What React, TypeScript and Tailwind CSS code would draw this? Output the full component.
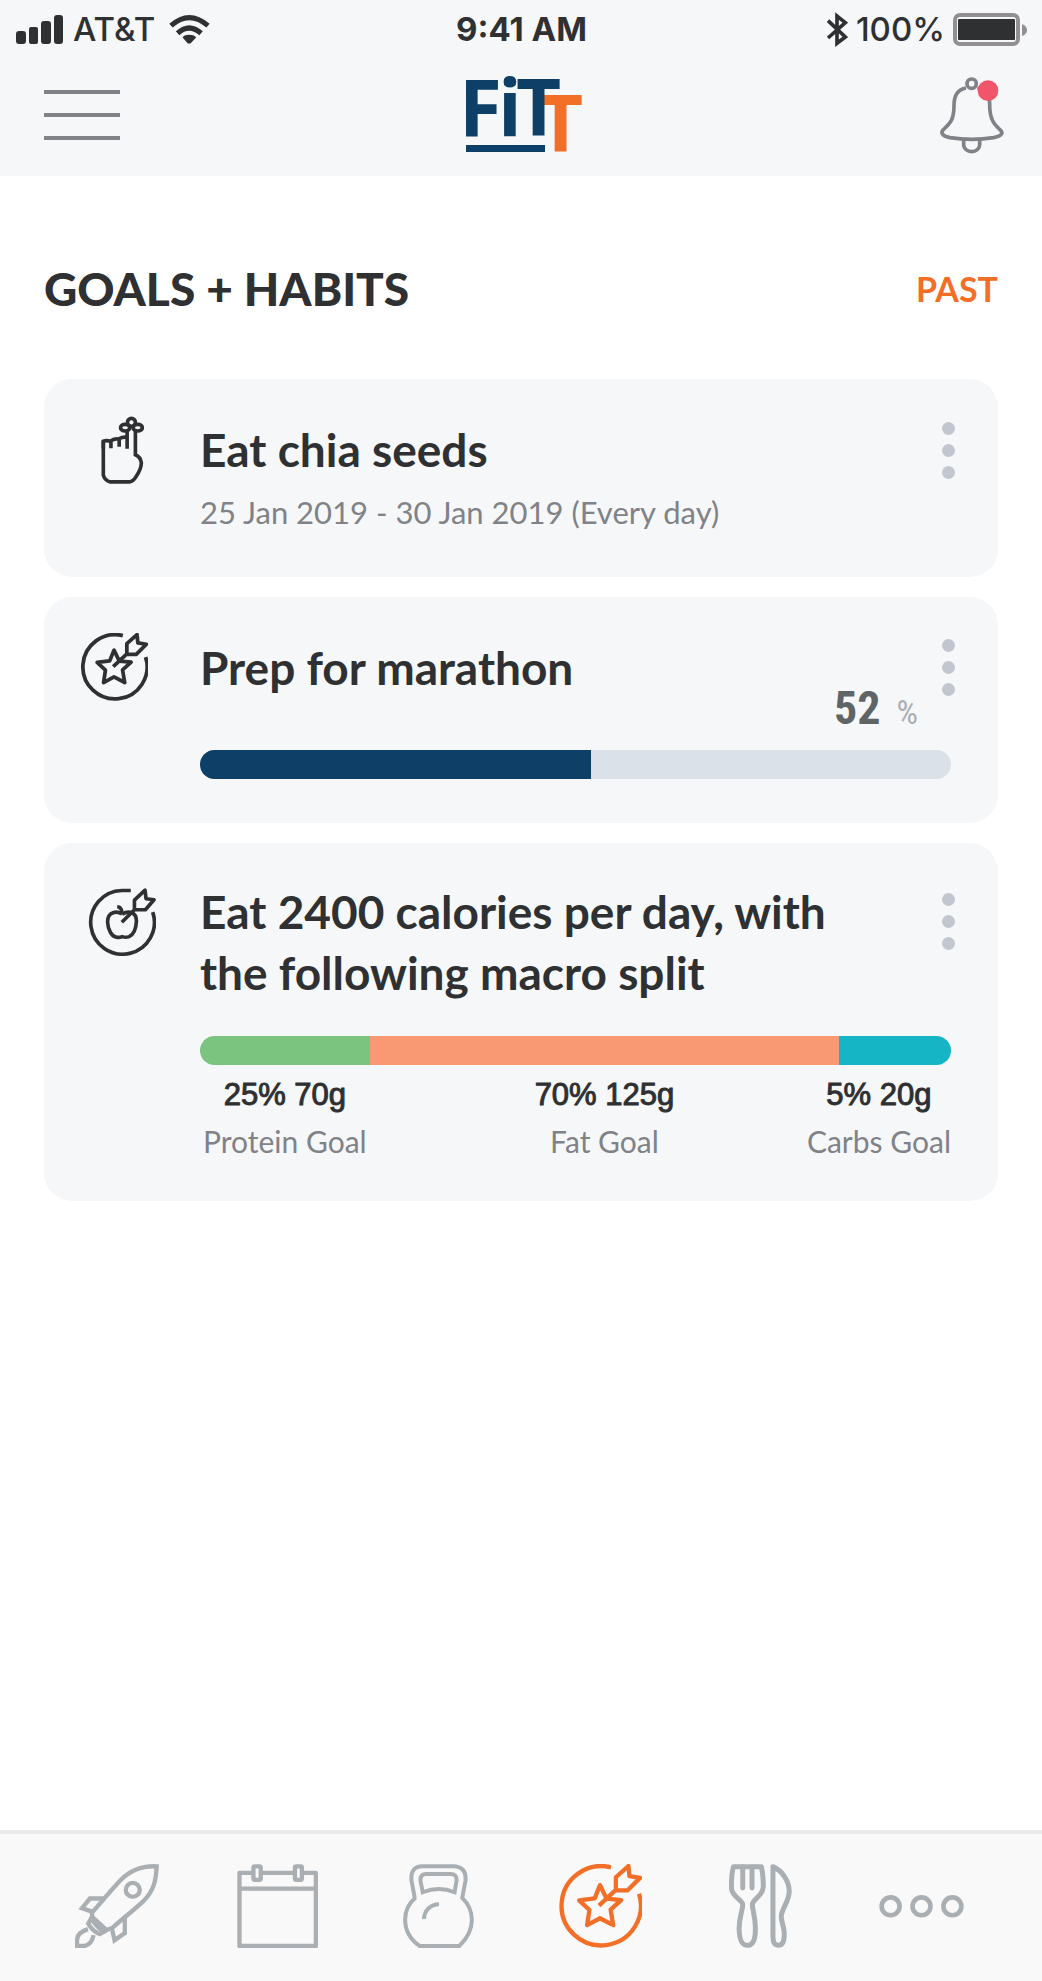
import type { ReactNode } from 'react'

const macros = [
  { share: '25%', grams: '70g', label: 'Protein Goal', color: 'bg-[#7bc47f]', align: 'justify-self-center' },
  { share: '70%', grams: '125g', label: 'Fat Goal', color: 'bg-[#f99973]', align: 'justify-self-center' },
  { share: '5%', grams: '20g', label: 'Carbs Goal', color: 'bg-[#15b5c6]', align: 'justify-self-end' },
]

const macroColumns = 'grid grid-cols-[minmax(0,170fr)_minmax(0,470fr)_minmax(0,112fr)]'

function SignalIcon() {
  return (
    <svg className="h-[29px] w-[47px]" viewBox="0 0 47 29" fill="currentColor" aria-hidden="true">
      <rect x="0" y="16" width="10" height="13" rx="3" />
      <rect x="13" y="12" width="9" height="17" rx="2" />
      <rect x="25" y="6" width="10" height="23" rx="3" />
      <rect x="38" y="0" width="9" height="29" rx="3" />
    </svg>
  )
}

function WifiIcon() {
  return (
    <svg className="h-[29px] w-[41px]" viewBox="510 39 124 87" aria-hidden="true">
      <path d="M516 71 Q571 22 628 71" fill="none" stroke="currentColor" strokeWidth="15" />
      <path d="M536 94 Q571 62 607 94" fill="none" stroke="currentColor" strokeWidth="16" />
      <path d="M551 107 Q554 98 571 98 Q588 98 592 107 L575 125 H567 Z" fill="currentColor" />
    </svg>
  )
}

function BluetoothIcon() {
  return (
    <svg className="h-[35px] w-[21px]" viewBox="144 30 63 105" fill="none" stroke="currentColor" strokeWidth="11" aria-hidden="true">
      <path d="M147 56 L199 105 L174 124 V42 L199 62 L147 108" />
    </svg>
  )
}

function BatteryIcon() {
  return (
    <svg className="h-[33px] w-[74px]" viewBox="0 0 74 33" aria-hidden="true">
      <rect x="2" y="2" width="63" height="29" rx="5" fill="none" stroke="#918f90" strokeWidth="4" />
      <rect x="5" y="6" width="57" height="21" rx="1" fill="#2f3032" />
      <path d="M69 11 Q74 13 74 17 Q74 21 69 23 Z" fill="#918f90" />
    </svg>
  )
}

function Logo() {
  return (
    <svg className="h-[75px] w-[117px] overflow-visible" viewBox="0 0 117 75" role="img" aria-label="FiTT">
      <g fontFamily="'Open Sans', sans-serif" fontWeight="700" fontSize="78" fill="#0e3f66">
        <text x="72" y="74" fill="#f36e26">T</text>
        <text x="-7" y="58">F</text>
        <text x="32" y="58">i</text>
        <text x="50" y="58">T</text>
      </g>
      <rect x="0" y="67" width="79" height="7" fill="#0e3f66" />
    </svg>
  )
}

function BellIcon() {
  return (
    <svg className="h-[77px] w-16" viewBox="480 230 192 231" fill="none" stroke="#808287" strokeWidth="11" aria-hidden="true">
      <circle cx="575" cy="250" r="14" />
      <path d="M558 263 C535 267 522 285 522 315 C522 356 514 366 489 389 C481 399 489 408 510 412 Q575 422 641 412 C662 408 671 400 662 390 C640 371 629 355 629 312 C629 283 617 266 592 263" />
      <path d="M551 419 V434 A24 20 0 0 0 599 434 V419" />
      <circle cx="624" cy="271" r="31" fill="#f0556b" stroke="none" />
    </svg>
  )
}

function HandIcon() {
  return (
    <svg className="h-[68px] w-[43px]" viewBox="212 527 130 205" fill="none" stroke="currentColor" strokeWidth="11" aria-hidden="true">
      <path d="M219 625 V603 Q230 599 242 604 V624 M242 602 Q252 593 267 597 V620 M267 595 Q278 589 291 591" />
      <path d="M291 626 V573 M219 603 V706 Q224 722 240 726 H298 Q310 724 318 710 Q334 686 334 668 Q331 650 316 644 V573" />
      <circle cx="304" cy="546" r="12" strokeWidth="11" />
      <ellipse cx="285" cy="562" rx="14" ry="10" />
      <ellipse cx="323" cy="562" rx="14" ry="10" />
    </svg>
  )
}

function StarTargetIcon({ className, strokeWidth }: { className: string; strokeWidth: number }) {
  return (
    <svg className={className} viewBox="533 131 254 254" fill="none" stroke="currentColor" strokeWidth={strokeWidth} strokeLinejoin="round" aria-hidden="true">
      <path d="M693 141 A120 120 0 1 0 778 221" />
      <path d="M660 195 L644 235 L597 241 L628 270 L621 316 L660 295 L700 316 L692 269 L724 240 L680 236 Z" />
      <path d="M657 257 L708 209 V171 L746 137 L749 168 L781 173 L743 211 H708" />
    </svg>
  )
}

function AppleTargetIcon() {
  return (
    <svg className="size-[68px]" viewBox="174 146 205 204" fill="none" stroke="currentColor" strokeWidth="11" strokeLinejoin="round" aria-hidden="true">
      <path d="M303 153 H276 A96 96 0 1 0 369 218" />
      <path d="M277 224 C262 214 233 216 233 248 C234 274 247 291 258 293 Q268 296 277 292 Q288 296 298 292 C311 286 319 268 320 245 C320 218 297 213 277 224" />
      <path d="M262 202 Q275 203 276 218" />
      <path d="M276 249 L314 211 V182 L346 152 L349 178 L373 181 L347 211 H314" />
    </svg>
  )
}

function RocketIcon() {
  return (
    <svg className="h-[84px] w-[84px]" viewBox="75 131 253 253" fill="none" stroke="currentColor" strokeWidth="13" aria-hidden="true">
      <path d="M321 138 C270 136 237 154 212 180 C185 208 160 240 126 278 L127 290 L170 330 L188 323 C220 294 250 272 282 242 C313 210 319 180 321 138 Z" />
      <circle cx="249" cy="209" r="21" />
      <path d="M166 235 H120 L96 264 L130 276" />
      <path d="M225 294 V339 L194 361 L186 324" />
      <path d="M126 290 L115 310 Q126 332 149 342 L170 331 M128 300 Q138 318 157 331" />
      <path d="M114 327 Q82 337 81 360 V378 H104 Q126 372 131 345" />
    </svg>
  )
}

function CalendarIcon() {
  return (
    <svg className="h-[84px] w-[81px]" viewBox="561 131 243 253" fill="none" stroke="currentColor" strokeWidth="13" strokeLinejoin="round" aria-hidden="true">
      <path d="M568 158 H798 V378 H568 Z M568 205 H798" />
      <rect x="610" y="138" width="22" height="41" rx="4" fill="#f9f9f9" />
      <rect x="735" y="138" width="21" height="41" rx="4" fill="#f9f9f9" />
    </svg>
  )
}

function KettlebellIcon() {
  return (
    <svg className="h-[84px] w-[71px]" viewBox="72 131 213 253" fill="none" stroke="currentColor" strokeWidth="12" aria-hidden="true">
      <path d="M107 233 L97 180 Q94 138 130 138 H225 Q263 141 260 180 L250 233 C273 255 279 278 279 300 C279 338 256 364 241 378 H122 C90 356 78 325 78 298 C78 265 94 245 110 232" />
      <path d="M131 216 L124 180 Q124 161 142 161 H215 Q234 161 233 180 L227 216 Q180 196 131 216 Z" />
      <path d="M135 297 C135 271 155 252 180 252" />
    </svg>
  )
}

function CutleryIcon() {
  return (
    <svg className="h-[84px] w-[63px]" viewBox="90 131 189 253" fill="none" stroke="currentColor" strokeWidth="15" strokeLinejoin="round" aria-hidden="true">
      <path d="M103 139 H187 Q193 165 193 200 C191 230 160 236 160 254 C160 270 170 290 169 328 C169 365 160 376 145 376 C130 376 121 365 120 326 C120 290 131 270 131 254 C131 240 99 230 97 205 Q96 165 103 139 Z" />
      <path d="M131 140 V203 M159 140 V203" strokeLinecap="round" />
      <path d="M222 139 C252 152 271 185 271 213 C271 245 247 266 247 290 C247 305 257 325 256 345 C256 370 248 376 238 376 C228 376 222 368 222 350 Z" />
    </svg>
  )
}

function MoreIcon() {
  return (
    <svg className="h-[23px] w-[85px]" viewBox="540 225 256 69" fill="none" stroke="currentColor" strokeWidth="14" aria-hidden="true">
      <circle cx="575" cy="259" r="27" />
      <circle cx="668" cy="259" r="27" />
      <circle cx="761" cy="259" r="27" />
    </svg>
  )
}

function DotsButton({ className }: { className: string }) {
  return (
    <button type="button" aria-label="Goal options" className={`flex shrink-0 flex-col gap-[9px] ${className}`}>
      <span className="size-[13px] rounded-full bg-[#c2c7cf]" />
      <span className="size-[13px] rounded-full bg-[#c2c7cf]" />
      <span className="size-[13px] rounded-full bg-[#c2c7cf]" />
    </button>
  )
}

function Card({ icon, iconClass, className, children }: { icon: ReactNode; iconClass: string; className: string; children: ReactNode }) {
  return (
    <article className={`flex rounded-[28px] bg-[#f6f7f9] pr-[43px] ${className}`}>
      <div className={`flex w-[156px] shrink-0 justify-center self-start ${iconClass}`}>{icon}</div>
      <div className="min-w-0 flex-1">{children}</div>
    </article>
  )
}

const tabs = [
  { name: 'Start', icon: <RocketIcon /> },
  { name: 'Calendar', icon: <CalendarIcon /> },
  { name: 'Workouts', icon: <KettlebellIcon /> },
  { name: 'Goals', icon: <StarTargetIcon className="size-[84px]" strokeWidth={13} />, active: true },
  { name: 'Nutrition', icon: <CutleryIcon /> },
  { name: 'More', icon: <MoreIcon /> },
]

export default function App() {
  const progress = 52

  return (
    <div className="flex min-h-screen flex-col bg-white font-['Lato',sans-serif] text-[#2f3032]">
      <header className="bg-[#f6f7f9] pb-0.5">
        <div className="grid h-14 grid-cols-[1fr_auto_1fr] items-center pt-0.5 pr-[15px] pl-4 font-['Inter',sans-serif] text-[33px] leading-none font-medium">
          <div className="flex items-center gap-2.5">
            <SignalIcon />
            <span>AT&amp;T</span>
            <span className="pl-1"><WifiIcon /></span>
          </div>
          <span className="font-bold">9:41 AM</span>
          <div className="flex items-center justify-end gap-2">
            <BluetoothIcon />
            <span>100%</span>
            <BatteryIcon />
          </div>
        </div>
        <div className="grid h-[118px] grid-cols-[1fr_auto_1fr] items-center pr-[38px] pl-11">
          <button type="button" aria-label="Menu" className="flex w-[76px] flex-col gap-[19px]">
            <span className="h-1 bg-[#808287]" />
            <span className="h-1 bg-[#808287]" />
            <span className="h-1 bg-[#808287]" />
          </button>
          <Logo />
          <button type="button" aria-label="Notifications" className="justify-self-end">
            <BellIcon />
          </button>
        </div>
      </header>

      <main className="flex-1 px-11 pt-[83px] pb-10">
        <div className="mb-[60px] flex items-center justify-between leading-[60px]">
          <h1 className="text-[46px] font-black">GOALS + HABITS</h1>
          <a href="#past" className="text-[34px] font-bold text-[#f36e26]">PAST</a>
        </div>

        <div className="flex flex-col gap-5">
          <Card icon={<HandIcon />} iconClass="pt-[37px]" className="pb-[45px]">
            <div className="flex items-start justify-between pt-10">
              <h2 className="text-[46px] leading-[61px] font-bold">Eat chia seeds</h2>
              <DotsButton className="mt-[3px]" />
            </div>
            <p className="mt-3 text-[31px] leading-10 text-[#808287]">25 Jan 2019 - 30 Jan 2019 (Every day)</p>
          </Card>

          <Card icon={<StarTargetIcon className="size-[68px]" strokeWidth={14} />} iconClass="pt-9 pr-4" className="pb-11">
            <div className="flex items-start pt-10">
              <h2 className="flex-1 text-[46px] leading-[61px] font-bold">Prep for marathon</h2>
              <p className="mt-[46px] mr-6 flex items-baseline gap-4 font-['Roboto_Condensed','Roboto',sans-serif] leading-[50px]">
                <span className="text-[46px] font-bold text-[#5f6567]">{progress}</span>
                <span className="text-[34px] text-[#a9afb3]">%</span>
              </p>
              <DotsButton className="mt-0.5" />
            </div>
            <div
              role="progressbar"
              aria-label="Prep for marathon"
              aria-valuenow={progress}
              className="mt-[13px] mr-1 h-[29px] overflow-hidden rounded-full bg-[#dbe1e8]"
            >
              <div className="h-full bg-[#0e3f66]" style={{ width: `${progress}%` }} />
            </div>
          </Card>

          <Card icon={<AppleTargetIcon />} iconClass="pt-[45px]" className="pb-10">
            <div className="flex items-start justify-between pt-[38px]">
              <h2 className="max-w-[660px] text-[46px] leading-[61px] font-bold">
                Eat 2400 calories per day, with the following macro split
              </h2>
              <DotsButton className="mt-3" />
            </div>
            <div className={`mt-[33px] mr-1 h-[29px] overflow-hidden rounded-full ${macroColumns}`}>
              {macros.map((macro) => (
                <div key={macro.label} className={macro.color} />
              ))}
            </div>
            <div className={`mt-3 mr-1 ${macroColumns}`}>
              {macros.map((macro) => (
                <div key={macro.label} className={`w-max text-center ${macro.align}`}>
                  <p className="font-['Liberation_Sans',sans-serif] text-[31px] leading-9 [-webkit-text-stroke:1px]">
                    {macro.share} {macro.grams}
                  </p>
                  <p className="mt-2 text-[30px] leading-10 text-[#808287]">{macro.label}</p>
                </div>
              ))}
            </div>
          </Card>
        </div>
      </main>

      <nav className="flex items-center justify-between border-t-4 border-[#e9ebed] bg-[#f9f9f9] pt-[30px] pr-[78px] pb-[33px] pl-[74px]">
        {tabs.map((tab) => (
          <button
            key={tab.name}
            type="button"
            aria-label={tab.name}
            className={`flex w-[85px] items-center justify-center ${tab.active ? 'text-[#f36e26]' : 'text-[#a9afb3]'}`}
          >
            {tab.icon}
          </button>
        ))}
      </nav>
    </div>
  )
}
